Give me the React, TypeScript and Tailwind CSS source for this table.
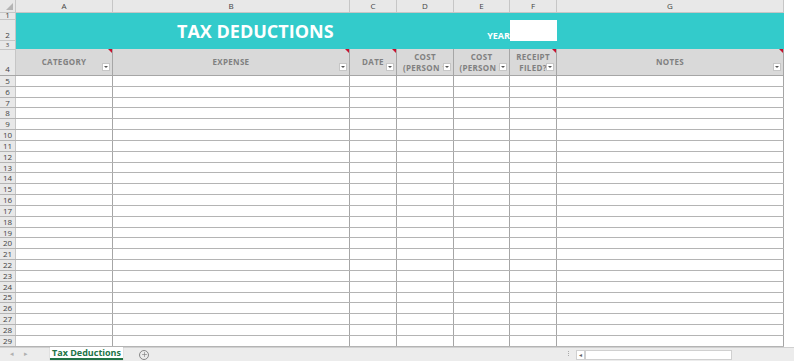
import { Plus } from "lucide-react"

const cols = ["A", "B", "C", "D", "E", "F", "G"]
const bodyRows = Array.from({ length: 25 }, (_, i) => i + 5)

const headers = [
  { lines: ["CATEGORY"], note: true },
  { lines: ["EXPENSE"], note: true },
  { lines: ["DATE"], note: true },
  { lines: ["COST", "(PERSON 1"], note: false },
  { lines: ["COST", "(PERSON 2"], note: false },
  { lines: ["RECEIPT", "FILED?"], note: true },
  { lines: ["NOTES"], note: true },
]

const gridCols = "grid grid-cols-[16px_97px_237px_47px_57px_56px_47px_227px]"

function FilterButton() {
  return (
    <div className="absolute right-[2px] bottom-[4px] w-[8px] h-[8px] bg-white border border-[#c6c6c6] flex items-center justify-center">
      <div className="w-0 h-0 border-l-[2px] border-r-[2px] border-t-[2px] border-l-transparent border-r-transparent border-t-[#555]" />
    </div>
  )
}

function NoteMark() {
  return (
    <div className="absolute right-0 top-0 w-0 h-0 border-l-[4px] border-b-[4px] border-l-transparent border-b-transparent border-t-[4px] border-t-[#c8102e] border-r-[0px]" />
  )
}

export default function App() {
  return (
    <div className="w-[794px] h-[361px] bg-white overflow-hidden font-['Open_Sans',_'Liberation_Sans',_sans-serif] text-[#444]">
      <div className="w-[784px]">
        {/* Column letters */}
        <div className={`${gridCols} h-[13px] bg-[#e8e8e8] border-b border-[#c6c6c6]`}>
          <div className="relative border-r border-[#c6c6c6]">
            <div className="absolute right-[2px] bottom-[2px] w-0 h-0 [border-bottom:7px_solid_#b4b4b4] [border-left:7px_solid_transparent]" />
          </div>
          {cols.map((c) => (
            <div key={c} className="border-r border-[#c6c6c6] flex items-center justify-center text-[8px] leading-none">
              {c}
            </div>
          ))}
        </div>

        {/* Title band, rows 1-3 */}
        <div className="flex">
          <div className="w-[16px] bg-[#e8e8e8] border-r border-[#c6c6c6] flex flex-col text-[8px] leading-none">
            <div className="h-[7px] border-b border-[#c6c6c6] flex items-end justify-center">1</div>
            <div className="h-[21px] border-b border-[#c6c6c6] flex items-end justify-center pb-[1px]">2</div>
            <div className="h-[8px] flex items-center justify-center text-[6px] leading-none">3</div>
          </div>
          <div className="flex-1 h-[36px] bg-[#33cbcb] grid grid-cols-[97px_237px_47px_57px_56px_47px_227px] grid-rows-[7px_21px_8px]">
            <div className="row-start-2 col-start-1 col-span-3 flex items-end pl-[161px] pb-[1px]">
              <span className="text-white font-bold text-[18px] leading-none whitespace-nowrap">TAX DEDUCTIONS</span>
            </div>
            <div className="row-start-2 col-start-5 flex items-end justify-end pb-[1px]">
              <span className="text-white font-bold text-[9px] leading-none">YEAR</span>
            </div>
            <div className="row-start-2 col-start-6 bg-white" />
          </div>
        </div>

        {/* Header row 4 */}
        <div className={`${gridCols} h-[27px] border-b border-[#a6a6a6]`}>
          <div className="bg-[#e8e8e8] border-r border-t border-[#c6c6c6] flex items-end justify-center text-[8px] leading-none pb-[2px]">4</div>
          {headers.map((h, i) => (
            <div key={i} className="relative bg-[#d9d9d9] border-r border-[#a6a6a6] flex flex-col items-center justify-center pb-[1px] text-[8px] leading-[11px] font-bold text-[#808080] tracking-[0.3px]">
              {h.lines.map((l) => (
                <span key={l} className="whitespace-nowrap">{l}</span>
              ))}
              {h.note && <NoteMark />}
              <FilterButton />
            </div>
          ))}
        </div>

        {/* Body rows */}
        {bodyRows.map((r) => (
          <div key={r} className={`${gridCols} h-[10.84px] border-b border-[#b4b4b4]`}>
            <div className="bg-[#e8e8e8] border-r border-[#c6c6c6] flex items-center justify-center text-[8px] leading-none">{r}</div>
            {cols.map((c) => (
              <div key={c} className="border-r border-[#a6a6a6]" />
            ))}
          </div>
        ))}
      </div>

      {/* Sheet tab bar */}
      <div className="h-[14px] bg-[#ececec] border-t border-[#d0d0d0] flex items-start text-[9px] leading-none">
        <div className="w-[50px] flex items-center gap-[10px] pl-[10px] h-[12px] text-[#b0b0b0] text-[7px]">
          <span>◂</span>
          <span>▸</span>
        </div>
        <div className="w-[73px] h-[13px] bg-white border-b-2 border-[#217346] flex items-center justify-center -mt-px shadow-[0_0_1px_#aaa]">
          <span className="font-bold text-[#217346]">Tax Deductions</span>
        </div>
        <div className="ml-[16px] mt-[2px] w-[10px] h-[10px] rounded-full border border-[#888] flex items-center justify-center text-[#777]">
          <Plus size={7} strokeWidth={2} />
        </div>
        <div className="ml-[419px] mt-[3px] flex flex-col gap-[1px]">
          <div className="w-[1px] h-[1px] bg-[#aaa]" />
          <div className="w-[1px] h-[1px] bg-[#aaa]" />
          <div className="w-[1px] h-[1px] bg-[#aaa]" />
        </div>
        <div className="ml-[7px] mt-[2px] w-[9px] h-[10px] bg-white border border-[#d0d0d0] flex items-center justify-center text-[6px] text-[#666]">◂</div>
        <div className="mt-[2px] w-[147px] h-[10px] bg-white border border-[#d0d0d0]" />
      </div>
    </div>
  )
}
